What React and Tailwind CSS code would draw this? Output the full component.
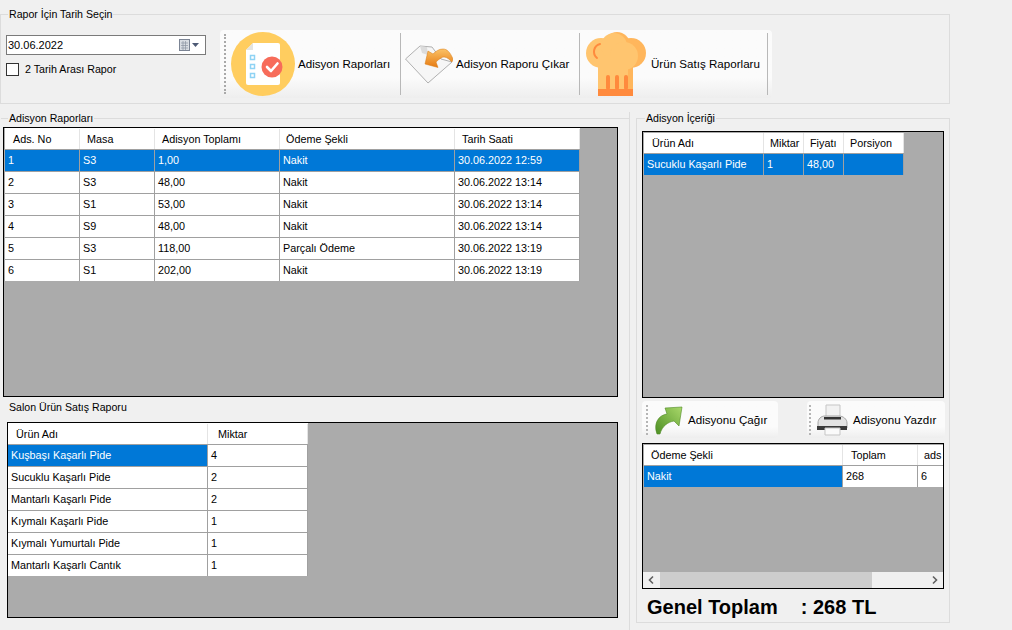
const font = { fontFamily: '"Liberation Sans", Arial, sans-serif' };

const Group = ({ label, className, legendClass = "ml-2", children }) => (
  <fieldset className={`border border-[#dcdcdc] min-w-0 ${className}`}>
    <legend className={`${legendClass} px-px text-[10.6px] leading-[13px] text-black`}>{label}</legend>
    {children}
  </fieldset>
);

const Grid = ({ className, columns, rows, selected = [], headerClass = "h-[21px] pt-px" }) => (
  <div className={`border border-black bg-[#ababab] overflow-hidden ${className}`}>
    <div className={`flex w-max bg-white ${headerClass}`}>
      {columns.map((c) => (
        <div
          key={c.name}
          style={{ width: c.width, paddingLeft: c.pad ?? 9 }}
          className="bg-white border-r border-[#e4e4e4] text-[10.8px] leading-[20px] whitespace-nowrap overflow-hidden"
        >
          {c.name}
        </div>
      ))}
    </div>
    {rows.map((row, i) => (
      <div key={i} className="flex h-[22px] w-max">
        {row.map((cell, j) => {
          const sel = selected.includes(j) && i === 0;
          return (
            <div
              key={j}
              style={{ width: columns[j].width }}
              className={`border-t border-r border-[#a0a0a0] pl-[3px] text-[10.8px] leading-[21px] whitespace-nowrap overflow-hidden ${
                sel ? "bg-[#0078d7] text-white" : "bg-white text-black"
              }`}
            >
              {cell}
            </div>
          );
        })}
      </div>
    ))}
  </div>
);

const Grip = () => (
  <div className="w-[2px] self-center h-[60px] border-l-2 border-dotted border-[#a9a9a9]" />
);

const Sep = () => <div className="w-px h-[62px] self-center bg-[#b8b8b8]" />;

const ReportIcon = () => (
  <svg width="64" height="64" viewBox="0 0 64 64" className="shrink-0">
    <circle cx="32" cy="32" r="32" fill="#ffcd5f" />
    <path d="M22 11h25a2 2 0 0 1 2 2v38a2 2 0 0 1-2 2H17a2 2 0 0 1-2-2V18z" fill="#fff" />
    <path d="M22 11v7h-7z" fill="#e4e4e0" />
    <g fill="none" stroke="#8fd3f4" strokeWidth="1.5">
      <rect x="19.5" y="23.5" width="4" height="4" />
      <rect x="19.5" y="32.5" width="4" height="4" />
      <rect x="19.5" y="41.5" width="4" height="4" />
    </g>
    <circle cx="41" cy="35" r="10.5" fill="#f76c5a" />
    <path d="M36 35l4 4 6.5-7.5" fill="none" stroke="#fff" strokeWidth="2.6" strokeLinecap="round" strokeLinejoin="round" />
  </svg>
);

const PaperArrowIcon = () => (
  <svg width="48" height="42" viewBox="0 0 48 42" className="shrink-0">
    <defs>
      <linearGradient id="orangeArrow" x1="0" y1="0" x2="0" y2="1">
        <stop offset="0" stopColor="#fbc266" />
        <stop offset="1" stopColor="#e67a12" />
      </linearGradient>
    </defs>
    <path d="M.5 16L15 3l12 1 9 12 11 3-24 21z" fill="#f6f6f6" stroke="#b0b0b0" />
    <path d="M15 3l7 1 1 8-6-2z" fill="#dcdcdc" />
    <path
      d="M23 8L20 21l13 3.500-2-5.500c3-3 6-5 8-5 3 0 6 3 8 5l1-3c-3-7-6-10-10-10s-7 2-10 5z"
      fill="url(#orangeArrow)"
      stroke="#d9780f"
      strokeWidth=".5"
    />
  </svg>
);

const HatIcon = () => (
  <svg width="60" height="64" viewBox="0 0 60 64" className="shrink-0">
    <circle cx="45" cy="21" r="15" fill="#ffb65c" />
    <circle cx="31" cy="13" r="13" fill="#ffb65c" />
    <rect x="36" y="24" width="11" height="34" fill="#ffb65c" />
    <circle cx="15" cy="21" r="15" fill="#ffc56f" />
    <circle cx="28" cy="14" r="13" fill="#ffc56f" />
    <circle cx="38" cy="24" r="14" fill="#ffc56f" />
    <rect x="12" y="24" width="30" height="34" fill="#ffc56f" />
    <path d="M14 12a8 8 0 0 0-3 14" fill="none" stroke="#ff8a3d" strokeWidth="2" strokeLinecap="round" />
    <g fill="#ff8a3d">
      <rect x="20" y="43" width="4" height="15" rx="2" />
      <rect x="29" y="43" width="4" height="15" rx="2" />
      <rect x="38" y="43" width="4" height="15" rx="2" />
      <rect x="12" y="57" width="35" height="7" />
    </g>
  </svg>
);

const GreenArrowIcon = () => (
  <svg width="30" height="30" viewBox="0 0 30 30" className="shrink-0">
    <defs>
      <linearGradient id="greenArrow" x1="0" y1="1" x2="1" y2="0">
        <stop offset="0" stopColor="#4d8f24" />
        <stop offset="1" stopColor="#a9d86a" />
      </linearGradient>
    </defs>
    <path d="M4 29C0 18 6 10 14 9L12 3l17-1-3 19-5-5c-6 1-12 5-14 13z" fill="url(#greenArrow)" stroke="#4f8a25" strokeWidth=".6" />
  </svg>
);

const PrinterIcon = () => (
  <svg width="32" height="32" viewBox="0 0 32 32" className="shrink-0">
    <path d="M10 1h14v12H10z" fill="#f2f2f2" stroke="#c5c5c5" />
    <path d="M2 19c0-4 3-7 7-7h14c4 0 8 3 8 7v5H2z" fill="#e3e3e3" stroke="#a6a6a6" />
    <rect x="8" y="13" width="17" height="2.500" fill="#333" />
    <path d="M1 22h30v4H1z" fill="#3a3a3a" />
    <path d="M9 24h15v7H9z" fill="#fafafa" stroke="#c5c5c5" />
  </svg>
);

const ToolButton = ({ icon, label, className }) => (
  <div className={`flex items-center ${className}`}>
    {icon}
    <span className="text-[11.6px] text-black whitespace-nowrap">{label}</span>
  </div>
);

const reportCols = [
  { name: "Ads. No", width: 75, pad: 8 },
  { name: "Masa", width: 75, pad: 7 },
  { name: "Adisyon Toplamı", width: 125, pad: 7 },
  { name: "Ödeme Şekli", width: 175, pad: 6 },
  { name: "Tarih Saati", width: 125, pad: 7 },
];
const reportRows = [
  ["1", "S3", "1,00", "Nakit", "30.06.2022 12:59"],
  ["2", "S3", "48,00", "Nakit", "30.06.2022 13:14"],
  ["3", "S1", "53,00", "Nakit", "30.06.2022 13:14"],
  ["4", "S9", "48,00", "Nakit", "30.06.2022 13:14"],
  ["5", "S3", "118,00", "Parçalı Ödeme", "30.06.2022 13:19"],
  ["6", "S1", "202,00", "Nakit", "30.06.2022 13:19"],
];
const salesCols = [
  { name: "Ürün Adı", width: 200, pad: 8 },
  { name: "Miktar", width: 100, pad: 10 },
];
const salesRows = [
  ["Kuşbaşı Kaşarlı Pide", "4"],
  ["Sucuklu Kaşarlı Pide", "2"],
  ["Mantarlı Kaşarlı Pide", "2"],
  ["Kıymalı Kaşarlı Pide", "1"],
  ["Kıymalı Yumurtalı Pide", "1"],
  ["Mantarlı Kaşarlı Cantık", "1"],
];
const contentCols = [
  { name: "Ürün Adı", width: 120, pad: 8 },
  { name: "Miktar", width: 40, pad: 6 },
  { name: "Fiyatı", width: 40, pad: 6 },
  { name: "Porsiyon", width: 60, pad: 6 },
];
const payCols = [
  { name: "Ödeme Şekli", width: 199, pad: 7 },
  { name: "Toplam", width: 75, pad: 8 },
  { name: "ads", width: 30, pad: 6 },
];

export default function App() {
  return (
    <div style={font} className="w-[1012px] h-[630px] overflow-hidden bg-[#f0f0f0] text-black relative">
      <div className="pt-[8px]">
        <Group label="Rapor İçin Tarih Seçin" legendClass="ml-[7px]" className="w-[950px] h-[96px] flex">
          <div className="flex items-start h-full">
            <div className="ml-[5px] mt-[14px] w-[200px]">
              <div className="h-5 border border-[#7a7a7a] bg-white flex items-center pl-px pr-[2px]">
                <span className="text-[11px] flex-1">30.06.2022</span>
                <svg width="24" height="14" viewBox="0 0 24 14">
                  <rect x=".5" y="1.5" width="10" height="11" fill="#d9dde3" stroke="#7b8494" />
                  <path d="M2 5h7M2 7.500h7M2 10h7M4 3v9M6.500 3v9" stroke="#8b93a0" strokeWidth=".7" />
                  <path d="M13 5h7l-3.500 4z" fill="#4d5a75" />
                </svg>
              </div>
              <label className="flex items-center mt-[8px]">
                <span className="w-[13px] h-[13px] border border-[#333] bg-white" />
                <span className="ml-[6px] text-[10.7px] leading-[13px]">2 Tarih Arası Rapor</span>
              </label>
            </div>
            <div className="ml-[14px] mt-[9px] w-[552px] h-[68px] rounded-sm bg-gradient-to-b from-[#fbfbfb] from-70% to-[#eeeeee] flex">
              <div className="ml-[4px] flex"><Grip /></div>
              <ToolButton className="ml-[5px] w-[169px] gap-[3px]" icon={<ReportIcon />} label="Adisyon Raporları" />
              <Sep />
              <ToolButton className="ml-[4px] w-[174px] gap-[3px]" icon={<PaperArrowIcon />} label="Adisyon Raporu Çıkar" />
              <Sep />
              <ToolButton className="ml-[6px] w-[181px] gap-[5px]" icon={<HatIcon />} label="Ürün Satış Raporlaru" />
              <Sep />
            </div>
          </div>
        </Group>
      </div>

      <div className="flex mt-[8px]">
        <div className="w-[630px] shrink-0 border-r border-[#dcdcdc] h-[518px]">
          <fieldset className="border-t border-[#dcdcdc] min-w-0 ml-px">
            <legend className="ml-[7px] px-px text-[10.6px] leading-[13px]">Adisyon Raporları</legend>
          </fieldset>
          <Grid
            className="ml-[3px] mt-[2px] w-[615px] h-[270px] pl-px"
            columns={reportCols}
            rows={reportRows}
            selected={[0, 1, 2, 3, 4]}
          />
          <div className="ml-[9px] mt-[3px] text-[10.6px] leading-[13px] h-[22px] pt-[1px]">Salon Ürün Satış Raporu</div>
          <Grid
            className="ml-[7px] w-[611px] h-[196px]"
            columns={salesCols}
            rows={salesRows}
            selected={[0]}
          />
        </div>

        <Group label="Adisyon İçeriği" className="ml-[6px] w-[314px] h-[511px]">
          <Grid
            className="ml-[5px] mt-[6px] w-[302px] h-[267px] pt-px pl-px"
            headerClass="h-[20px]"
            columns={contentCols}
            rows={[["Sucuklu Kaşarlı Pide", "1", "48,00", ""]]}
            selected={[0, 1, 2, 3]}
          />
          <div className="flex ml-[5px] mt-[3px] h-[37px]">
            <div className="w-[136px] rounded-sm bg-gradient-to-b from-[#fbfbfb] from-70% to-[#eeeeee] flex items-center">
              <div className="ml-[4px] h-[30px] border-l-2 border-dotted border-[#b5b5b5]" />
              <div className="ml-[5px]"><GreenArrowIcon /></div>
              <span className="ml-[5px] text-[11.6px] whitespace-nowrap">Adisyonu Çağır</span>
            </div>
            <div className="ml-[29px] w-[138px] rounded-sm bg-gradient-to-b from-[#fbfbfb] from-70% to-[#eeeeee] flex items-center">
              <div className="ml-[2px] h-[30px] border-l-2 border-dotted border-[#b5b5b5]" />
              <div className="ml-[5px]"><PrinterIcon /></div>
              <span className="ml-[5px] text-[11.6px] whitespace-nowrap">Adisyonu Yazdır</span>
            </div>
          </div>
          <div className="relative ml-[5px] mt-[5px] w-[302px] h-[146px]">
            <Grid
              className="w-full h-full pt-px pl-px"
              headerClass="h-[20px]"
              columns={payCols}
              rows={[["Nakit", "268", "6"]]}
              selected={[0]}
            />
            {/* horizontal scrollbar laid over the grid */}
            <div className="absolute left-px right-px bottom-px h-[16px] bg-[#f0f0f0] flex items-center text-[#606060]">
              <svg width="17" height="16" viewBox="0 0 17 16"><path d="M10 4.500L6.500 8l3.500 3.500" fill="none" stroke="currentColor" strokeWidth="1.6" /></svg>
              <div className="w-[212px] h-full bg-[#cdcdcd]" />
              <div className="flex-1" />
              <svg width="17" height="16" viewBox="0 0 17 16"><path d="M7 4.500L10.500 8 7 11.500" fill="none" stroke="currentColor" strokeWidth="1.6" /></svg>
            </div>
          </div>
          <div className="ml-[10px] mt-[6px] flex text-[20px] leading-[24px] font-bold whitespace-nowrap">
            <span>Genel Toplam</span>
            <span className="ml-[23px]">: 268 TL</span>
          </div>
        </Group>
      </div>
    </div>
  );
}
